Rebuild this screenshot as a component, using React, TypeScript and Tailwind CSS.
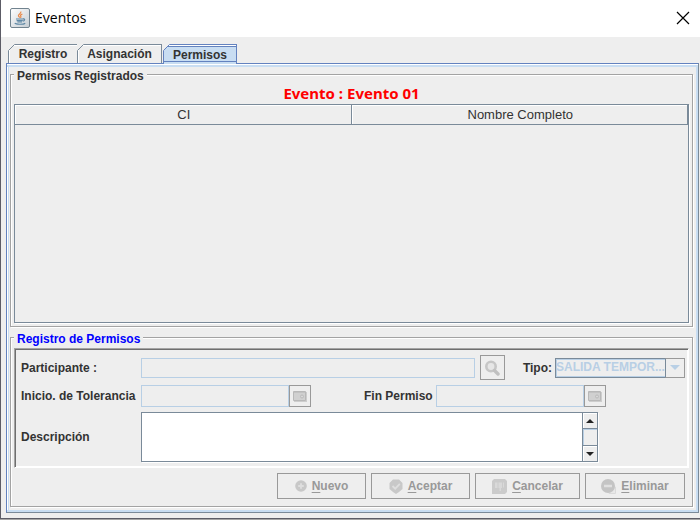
import React from "react";

const etched =
  "border border-[#a3a3a3] shadow-[inset_1px_1px_0_#fff,1px_1px_0_#fff]";
const fieldStyle =
  "min-w-0 border border-[#b8cfe5] bg-[#eeeeee] px-1 text-xs outline-none";
const iconButton =
  "flex shrink-0 items-center justify-center border border-[#999999] bg-[#eeeeee]";

function JavaIcon() {
  return (
    <svg width="20" height="20" viewBox="0 0 20 20" aria-hidden="true">
      <defs>
        <linearGradient id="cup" x1="0" y1="0" x2="1" y2="1">
          <stop offset="0" stopColor="#ffffff" />
          <stop offset="1" stopColor="#c4ccd2" />
        </linearGradient>
      </defs>
      <rect x="0.5" y="0.5" width="19" height="19" rx="1.5" fill="url(#cup)" stroke="#71838f" />
      <path d="M10.800 3.500c.8 2-2.600 2.600-2.400 4.200.1.900 1.100 1.200 1.300 2M12.400 6c-1.500.7-2.400 1.300-1.700 2.200.5.700.2 1.200-.4 1.500" fill="none" stroke="#e8894a" strokeWidth="1.200" />
      <path d="M6 11h7.400M6.600 12.600h6.200M7.400 14h4.600" stroke="#5f88a5" strokeWidth="1.200" />
      <path d="M13 10.900c2.200-.5 2.100 1.800 0 2.200M4.800 15.200c1 1.400 8.900 1.400 10.400 0" fill="none" stroke="#5f88a5" strokeWidth="1.200" />
    </svg>
  );
}

function SearchIcon() {
  return (
    <svg width="16" height="16" viewBox="0 0 16 16" aria-hidden="true">
      <circle cx="7" cy="6.500" r="4.700" fill="#e6e6e6" stroke="#c6c6c6" strokeWidth="2.600" />
      <path d="M10.500 10.500l3.500 3.500" stroke="#c0c0c0" strokeWidth="3.400" strokeLinecap="round" />
    </svg>
  );
}

function CalendarIcon() {
  return (
    <svg width="14" height="12" viewBox="0 0 14 12" aria-hidden="true">
      <path d="M1 2h13v10H1z" fill="#cdcdcd" />
      <path d="M.5 1.500h12v9H.5z" fill="#d0d0d0" stroke="#b8b8b8" />
      <path d="M1 2.500h11" stroke="#c2c2c2" />
      <circle cx="9" cy="6.500" r="1.500" fill="#d8d8d8" stroke="#bababa" />
    </svg>
  );
}

function PlusIcon() {
  return (
    <svg width="12" height="12" viewBox="0 0 12 12" aria-hidden="true">
      <circle cx="6" cy="6" r="5.800" fill="#c8c8c8" />
      <path d="M6 3.200v5.600M3.200 6h5.600" stroke="#dedede" strokeWidth="1.800" />
    </svg>
  );
}

function CheckIcon() {
  return (
    <svg width="14" height="15" viewBox="0 0 14 15" aria-hidden="true">
      <path d="M4 .5h6L13.500 4v6L10 13l-3 2-3-2L.5 10V4z" fill="#c8c8c8" />
      <path d="M3.500 7l2.700 2.700L10.800 4.800" fill="none" stroke="#dedede" strokeWidth="1.800" />
    </svg>
  );
}

function CancelIcon() {
  return (
    <svg width="15" height="15" viewBox="0 0 15 15" aria-hidden="true">
      <path d="M2 0h11l2 2v11l-2 2H0V2z" fill="#cbcbcb" />
      <path d="M3 3.500h2.500v5.500H3zM6.500 3.500h3.500v5.500H9V12H7.500V9h-1zM11 3.500h1v5h-1z" fill="#d9d9d9" />
    </svg>
  );
}

function MinusIcon() {
  return (
    <svg width="15" height="15" viewBox="0 0 15 15" aria-hidden="true">
      <path d="M8 8h6.500v6.500H8z" fill="#e8e8e8" stroke="#dadada" />
      <circle cx="7" cy="7" r="7" fill="#c4c4c4" />
      <path d="M3 7h8" stroke="#e0e0e0" strokeWidth="2.500" />
    </svg>
  );
}

function Tab({ label, look, selected }: { label: string; look: string; selected?: boolean }) {
  return (
    <button
      type="button"
      role="tab"
      aria-selected={!!selected}
      className={
        "relative text-center text-xs leading-[18px] font-bold " +
        look +
        (selected
          ? " h-5 border border-b-0 border-[#6382bf] bg-[#c8ddf2] shadow-[inset_0_1px_0_#fff,inset_0_2px_0_#6382bf,inset_0_-2px_0_#c8ddf2,inset_0_-3px_0_#6382bf]"
          : " h-[19px] border-t border-l border-[#7a8a99] bg-[#eeeeee] shadow-[inset_1px_1px_0_#fff]")
      }
    >
      <svg className="absolute -top-px -left-px" width="7" height="7" viewBox="0 0 7 7" aria-hidden="true">
        <path d="M0 0h7L0 7z" fill="#eeeeee" />
        <path d="M.5 6.500l6-6" stroke={selected ? "#6382bf" : "#7a8a99"} />
      </svg>
      {label}
    </button>
  );
}

function ActionButton({ icon, label, width }: { icon: React.ReactNode; label: string; width: string }) {
  return (
    <button
      type="button"
      disabled
      className={"flex h-[26px] items-center justify-center gap-[5px] border border-[#999999] text-xs font-bold text-[#999999] " + width}
    >
      {icon}
      <span>
        <span className="underline underline-offset-2">{label[0]}</span>
        {label.slice(1)}
      </span>
    </button>
  );
}

export default function App() {
  return (
    <div className="flex h-screen flex-col bg-[#a5a5a5] pb-px font-['Liberation_Sans',Arial,sans-serif] text-[#333333]">
      <div className="flex grow flex-col border-b border-l border-[#5c5c66] bg-[#eeeeee]">
        <header className="flex h-[37px] shrink-0 items-center bg-white pr-[10px] pb-px pl-[9px]">
          <JavaIcon />
          <h1 className="grow pl-[5px] font-['Open_Sans','Noto_Sans',sans-serif] text-sm text-black">Eventos</h1>
          <button type="button" aria-label="Cerrar">
            <svg width="14" height="14" viewBox="0 0 14 14" aria-hidden="true">
              <path d="M1 1l12 12M13 1L1 13" stroke="#000" strokeWidth="1.200" />
            </svg>
          </button>
        </header>

        <main className="flex grow flex-col pt-[7px] pr-px pb-[5px] pl-[5px]">
          <div role="tablist" className="relative z-10 -mb-px flex items-start pl-[2px]">
            <Tab label="Registro" look="w-[69px]" />
            <Tab label="Asignación" look="mr-px w-[85px] border-r" />
            <Tab label="Permisos" look="w-[74px]" selected />
          </div>

          <div role="tabpanel" className="flex grow flex-col border border-t-[#6382bf] border-r-[#7a8a99] border-b-[#7a8a99] border-l-[#6382bf] bg-white pt-px">
            <div className="flex grow flex-col gap-[10px] border-2 border-l-0 border-[#c8ddf2] bg-[#eeeeee] pt-[7px] pr-[3px] pb-[3px] pl-[3px] shadow-[inset_1px_0_0_#fff,inset_2px_0_0_#c8ddf2]">
              <section className={"flex grow flex-col px-[3px] pb-[3px] " + etched}>
                <h2 className="-mt-[6px] self-start bg-[#eeeeee] px-[3px] text-xs leading-[14px] font-bold">
                  Permisos Registrados
                </h2>
                <p className="pt-px pb-px text-center font-['Noto_Sans','DejaVu_Sans',sans-serif] text-[15px] leading-[19px] font-bold text-[#ff0000]">
                  Evento : Evento 01
                </p>
                <div className="grow border border-[#7a8a99] shadow-[1px_1px_0_#fff]">
                  <table className="w-full table-fixed border-separate border-spacing-0 text-[13px] leading-[18px]">
                    <thead>
                      <tr>
                        <th className="border-r border-b border-[#7a8a99] p-0 pt-px pl-[2px] font-normal shadow-[inset_1px_1px_0_#fff]">CI</th>
                        <th className="border-r border-b border-[#7a8a99] p-0 pt-px pl-[2px] font-normal shadow-[inset_1px_1px_0_#fff]">Nombre Completo</th>
                      </tr>
                    </thead>
                  </table>
                </div>
              </section>

              <section className={"flex flex-col px-[3px] pb-[7px] " + etched}>
                <h2 className="-mt-[6px] self-start bg-[#eeeeee] px-[3px] text-xs leading-[14px] font-bold text-[#0000ff]">
                  Registro de Permisos
                </h2>
                <form className="mt-[2px]">
                  <div className="border border-t-[#a3a3a3] border-r-white border-b-white border-l-[#a3a3a3] pt-[6px] pr-[3px] pb-[5px] pl-[6px] text-xs font-bold shadow-[inset_1px_1px_0_#6e6e6e,inset_-1px_-1px_0_#fff]">
                    <div className="flex h-[25px] items-center">
                      <label htmlFor="participante" className="w-[120px] shrink-0">Participante :</label>
                      <input id="participante" disabled className={"h-5 grow " + fieldStyle} />
                      <button type="button" disabled aria-label="Buscar" className={"ml-[5px] size-[25px] " + iconButton}>
                        <SearchIcon />
                      </button>
                      <label htmlFor="tipo" className="pr-[3px] pl-[18px]">Tipo:</label>
                      <div className="relative flex h-5 w-[130px] shrink-0">
                        <select
                          id="tipo"
                          disabled
                          className="h-5 grow appearance-none border border-[#7a8a99] bg-[#eeeeee] p-0 pb-[2px] text-xs font-bold text-[#b8cfe5] opacity-100 shadow-[inset_0_0_0_1px_#b8cfe5]"
                        >
                          <option>SALIDA TEMPOR...</option>
                        </select>
                        <span className="pointer-events-none absolute inset-y-0 right-0 flex w-5 items-center justify-center border border-l-[#7a8a99] border-[#999999] bg-[#eeeeee]">
                          <svg width="10" height="5" viewBox="0 0 10 5" aria-hidden="true">
                            <path d="M0 0h10L5 5z" fill="#b8cfe5" />
                          </svg>
                        </span>
                      </div>
                    </div>

                    <div className="mt-[5px] flex h-[22px] items-center">
                      <label htmlFor="inicio" className="w-[120px] shrink-0">Inicio. de Tolerancia</label>
                      <input id="inicio" disabled className={"h-[22px] w-[148px] " + fieldStyle} />
                      <button type="button" disabled aria-label="Elegir inicio" className={"size-[22px] " + iconButton}>
                        <CalendarIcon />
                      </button>
                      <label htmlFor="fin" className="pr-[3px] pl-[53px]">Fin Permiso</label>
                      <input id="fin" disabled className={"h-[22px] w-[148px] " + fieldStyle} />
                      <button type="button" disabled aria-label="Elegir fin" className={"size-[22px] " + iconButton}>
                        <CalendarIcon />
                      </button>
                    </div>

                    <div className="mt-[5px] flex h-[50px] items-center">
                      <label htmlFor="descripcion" className="w-[120px] shrink-0">Descripción</label>
                      <div className="flex h-[50px] w-[457px] border border-[#7a8a99] bg-white shadow-[1px_1px_0_#fff]">
                        <textarea id="descripcion" className="grow resize-none overflow-hidden p-1 font-normal outline-none" />
                        <div className="flex w-[15px] flex-col border-l border-[#7a8a99] bg-[#eeeeee]">
                          <button type="button" aria-label="Subir" className="flex h-4 items-center justify-center border-b border-[#7a8a99] shadow-[inset_1px_1px_0_#fff]">
                            <svg width="8" height="4" viewBox="0 0 8 4" aria-hidden="true">
                              <path d="M4 0l4 4H0z" fill="#222" />
                            </svg>
                          </button>
                          <span className="grow border-t border-l border-[#b8cfe5]" />
                          <button type="button" aria-label="Bajar" className="flex h-4 items-center justify-center border-t border-[#7a8a99] shadow-[inset_1px_1px_0_#fff]">
                            <svg width="8" height="4" viewBox="0 0 8 4" aria-hidden="true">
                              <path d="M0 0h8L4 4z" fill="#222" />
                            </svg>
                          </button>
                        </div>
                      </div>
                    </div>
                  </div>

                  <div className="mt-[5px] flex justify-end gap-[5px] pr-1">
                    <ActionButton icon={<PlusIcon />} label="Nuevo" width="w-[89px]" />
                    <ActionButton icon={<CheckIcon />} label="Aceptar" width="w-[99px]" />
                    <ActionButton icon={<CancelIcon />} label="Cancelar" width="w-[105px]" />
                    <ActionButton icon={<MinusIcon />} label="Eliminar" width="w-[100px]" />
                  </div>
                </form>
              </section>
            </div>
          </div>
        </main>
      </div>
    </div>
  );
}
